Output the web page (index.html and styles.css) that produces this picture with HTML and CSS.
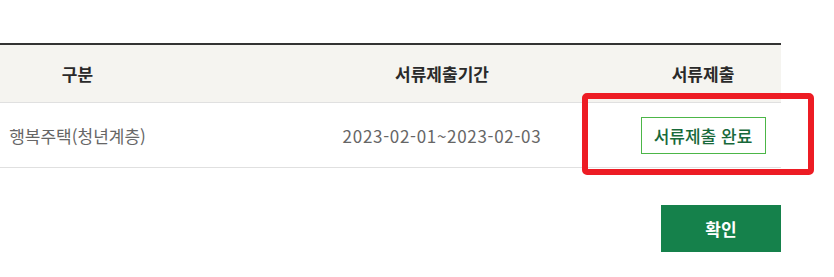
FILE: index.html
```html
<!DOCTYPE html>
<html lang="ko">
<head>
<meta charset="utf-8">
<link rel="stylesheet" href="styles.css">
</head>
<body>
<div class="wrap">
  <div class="table">
    <div class="row head">
      <div class="cell c1">구분</div>
      <div class="cell c2">서류제출기간</div>
      <div class="cell c3">서류제출</div>
    </div>
    <div class="row body">
      <div class="cell c1">행복주택(청년계층)</div>
      <div class="cell c2"><span class="date">2023-02-01~2023-02-03</span></div>
      <div class="cell c3"><span class="done">서류제출 완료</span></div>
    </div>
  </div>
  <div class="actions"><button class="ok">확인</button></div>
  <div class="highlight"></div>
</div>
</body>
</html>
```
FILE: styles.css
```css
html, body { margin: 0; padding: 0; background: #fff; }
body { font-family: "Noto Sans CJK KR", "Noto Sans", sans-serif; }
.wrap { position: relative; width: 781px; padding-top: 43px; }
.table { border-top: 2px solid #333; }
.row { display: flex; align-items: center; border-bottom: 1px solid #e0e0e0; }
.head { background: #f5f4f0; height: 57px; color: #2a2a2a; font-size: 17px; font-weight: 700; }
.body { height: 64px; color: #666; font-size: 17px; }
.cell { text-align: center; box-sizing: border-box; }
.c1 { width: 155px; }
.c2 { width: 470px; padding-left: 104px; }
.c3 { width: 156px; }
.date { letter-spacing: 0.7px; }
.done { display: inline-block; box-sizing: border-box; width: 125px; height: 37px; line-height: 35px; border: 1px solid #4cb648; color: #17693a; font-size: 17px; font-weight: 500; }
.actions { display: flex; justify-content: flex-end; padding-top: 37px; }
.ok { width: 120px; height: 47px; border: 0; background: #15814b; color: #fff; font-family: inherit; font-size: 17px; font-weight: 700; padding: 0; }
.highlight { position: absolute; left: 582px; top: 93px; width: 232px; height: 82px; box-sizing: border-box; border: 6px solid #ed1c24; border-radius: 5px; }
```
